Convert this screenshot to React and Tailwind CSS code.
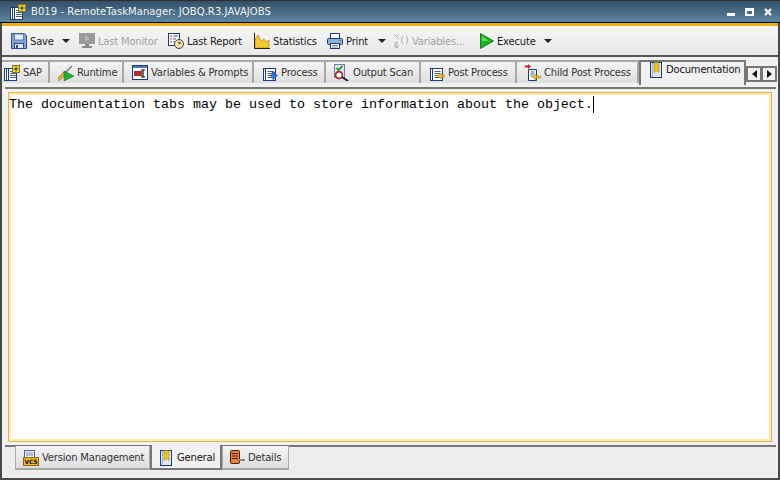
import { useState } from "react";

// small drawn icons
const DocBase = () => (
  <>
    <rect x="1.5" y="3.5" width="12" height="12" fill="#fff" stroke="#1c3c78" />
    <path d="M3.5 4v11" stroke="#1c3c78" />
    <path d="M5.5 6.5h6M5.5 8.5h6M5.5 10.5h6M5.5 12.5h6" stroke="#44618f" />
  </>
);

const SapIcon = () => (
  <svg width="16" height="16" viewBox="0 0 16 16" className="shrink-0">
    <rect x="0.5" y="3.5" width="12" height="12" fill="#fff" stroke="#1c3c78" />
    <path d="M2.5 4v11M4.5 4v11" stroke="#1c3c78" />
    <path d="M6 6.5h6M6 8.5h6M6 10.5h6M6 12.5h6" stroke="#44618f" />
    <rect x="8.5" y="0.5" width="7" height="7" fill="#f5d820" stroke="#8a7a10" />
    <path d="M12 1.5v5M9.5 4h5" stroke="#1c3c78" />
  </svg>
);

const SaveIcon = () => (
  <svg width="16" height="16" viewBox="0 0 16 16" className="shrink-0">
    <path d="M.5.5h13l2 2v13H.5z" fill="#7fa6d6" stroke="#2c4f8c" />
    <rect x="3.5" y="1" width="9" height="6" fill="#e8eef6" stroke="#5d7fb0" />
    <rect x="3.5" y="10.5" width="9" height="5" fill="#dfe6ef" stroke="#2c4f8c" />
    <rect x="5" y="12" width="2" height="3" fill="#2c4f8c" />
  </svg>
);

const MonitorIcon = () => (
  <svg width="16" height="16" viewBox="0 0 16 16" className="shrink-0">
    <rect x="0" y="0" width="16" height="11" fill="#9b9b9b" />
    <path d="M6 2.5l5 3-5 3z" fill="#b8b8b8" />
    <rect x="6" y="11" width="4" height="2" fill="#8a8a8a" />
    <rect x="3" y="13" width="10" height="2" fill="#8a8a8a" />
  </svg>
);

const ReportIcon = () => (
  <svg width="16" height="16" viewBox="0 0 16 16" className="shrink-0">
    <rect x="0.5" y="0.5" width="11" height="12" fill="#fff" stroke="#1c3c78" />
    <path d="M2 3h2M2 6h2M2 9h2" stroke="#c03030" />
    <path d="M5 3h5M5 6h3M5 9h2" stroke="#44618f" />
    <circle cx="11" cy="11" r="4.5" fill="#f3e3a8" stroke="#444" />
    <path d="M11 8.5V11l2-1.5" fill="none" stroke="#333" />
  </svg>
);

const StatsIcon = () => (
  <svg width="16" height="16" viewBox="0 0 16 16" className="shrink-0">
    <path d="M1 15V6l3-4 3 6 3-2 2 3 3-2v8z" fill="#f0c830" stroke="#a08010" strokeWidth=".6" />
    <path d="M.5 0v15.5H16" fill="none" stroke="#222" />
  </svg>
);

const PrintIcon = () => (
  <svg width="16" height="16" viewBox="0 0 16 16" className="shrink-0">
    <rect x="3.5" y="0.5" width="9" height="5" fill="#fff" stroke="#1c3c78" />
    <rect x="0.5" y="5.5" width="15" height="6" rx="1" fill="#8fb0d8" stroke="#1c3c78" />
    <rect x="12" y="7" width="2" height="1" fill="#30b040" />
    <rect x="3.5" y="10.5" width="9" height="5" fill="#fff" stroke="#1c3c78" />
    <path d="M5 12.5h6M5 14h6" stroke="#7f93b5" />
  </svg>
);

const VarsIcon = () => (
  <svg width="16" height="16" viewBox="0 0 16 16" className="shrink-0" fill="none" stroke="#a8a8a8">
    <path d="M1 1l5 5M6 1L3.5 3.5" stroke="#b5b5b5" />
    <path d="M5 15L2 11c-1-1.500 2-3 2.500-1.500S2 12 1.500 13s1 2 2 1.500L6 12" />
    <path d="M10 3C8.500 3 9.500 6 8 7c1.500 1 .5 4 2 4M13 3c1.500 0 .5 3 2 4-1.500 1-.5 4-2 4" />
  </svg>
);

const PlayIcon = () => (
  <svg width="14" height="16" viewBox="0 0 14 16" className="shrink-0">
    <path d="M0.5 0.5v15L13.5 8z" fill="#20b020" stroke="#178017" />
    <path d="M2 3v5h7z" fill="#60d860" />
  </svg>
);

const RuntimeIcon = () => (
  <svg width="16" height="16" viewBox="0 0 16 16" className="shrink-0">
    <path d="M1 14L7 8" stroke="#b08020" strokeWidth="3.4" strokeLinecap="round" />
    <path d="M1 14L7 8" stroke="#f0c050" strokeWidth="1.6" strokeLinecap="round" />
    <path d="M8 7l5-5 1-1" stroke="#777" strokeWidth="1.5" />
    <path d="M6 6v10l10-5z" fill="#20b030" stroke="#178020" strokeWidth=".6" />
  </svg>
);

const VariablesIcon = () => (
  <svg width="16" height="15" viewBox="0 0 16 15" className="shrink-0">
    <rect x="0.5" y="0.5" width="15" height="14" fill="#fff" stroke="#1c3c78" />
    <rect x="1" y="1" width="14" height="2" fill="#4a78b8" />
    <rect x="2" y="6" width="8" height="5" fill="#b03030" />
    <path d="M9 5h4M11 5v7M9 12h4" stroke="#111" strokeWidth="1.2" />
  </svg>
);

const ProcessIcon = () => (
  <svg width="16" height="16" viewBox="0 0 16 16" className="shrink-0">
    <DocBase />
    <path d="M10 7h3v3h2.500L11.500 15 8 10h2z" fill="#3a7ad0" stroke="#1c3c78" strokeWidth=".5" />
  </svg>
);

const ScanIcon = () => (
  <svg width="16" height="17" viewBox="0 0 16 17" className="shrink-0">
    <rect x="0.5" y="0.5" width="10" height="13" fill="#dfe4ee" stroke="#6f7f9f" />
    <path d="M2.500 4l2 2 4-4" fill="none" stroke="#20a030" strokeWidth="1.8" />
    <circle cx="5" cy="11" r="3.4" fill="#fff" stroke="#b02020" strokeWidth="1.6" />
    <path d="M8 13l6 4" stroke="#222" strokeWidth="2" />
  </svg>
);

const PostIcon = () => (
  <svg width="16" height="16" viewBox="0 0 16 16" className="shrink-0">
    <DocBase />
    <path d="M8 11l4-3v2h4v2h-4v2z" fill="#f0c030" stroke="#9a7a10" strokeWidth=".5" />
  </svg>
);

const ChildPostIcon = () => (
  <svg width="16" height="17" viewBox="0 0 16 17" className="shrink-0">
    <path d="M0 2.500h4" stroke="#d01818" strokeWidth="2" />
    <path d="M3 0l3 2.500L3 5z" fill="#d01818" />
    <path d="M3.500 5.500h8v11h-8z" fill="#fff" stroke="#1c3c78" />
    <path d="M5.500 8h4M5.500 10h4M5.500 12h2" stroke="#44618f" />
    <path d="M7 13l4-3v2h5v2h-5v2z" fill="#f0c030" stroke="#9a7a10" strokeWidth=".5" />
  </svg>
);

const BookIcon = () => (
  <svg width="12" height="16" viewBox="0 0 12 16" className="shrink-0">
    <rect x="0.5" y="0.5" width="11" height="15" fill="#dfe6f2" stroke="#1c3c78" />
    <path d="M2.500 1v14" stroke="#9fb2d0" />
    <path d="M4 0.500h5v10l-2.500-2-2.500 2z" fill="#f0c020" stroke="#9a7a10" strokeWidth=".5" />
  </svg>
);

const VcsIcon = () => (
  <svg width="16" height="16" viewBox="0 0 16 16" className="shrink-0">
    <rect x="1.500" y="0.500" width="10" height="12" fill="#e8ecf4" stroke="#4a6796" />
    <path d="M3 3h7M3 5h7" stroke="#7f93b5" />
    <rect x="0.500" y="7.500" width="15" height="8" fill="#f0b828" stroke="#8a6810" />
    <text x="8" y="14" textAnchor="middle" fontFamily="DejaVu Sans" fontSize="6" fontWeight="700" fill="#111">VCS</text>
  </svg>
);

const DetailsIcon = () => (
  <svg width="15" height="15" viewBox="0 0 15 15" className="shrink-0">
    <rect x="0.500" y="0.500" width="9" height="13" rx="1" fill="#f08030" stroke="#402010" />
    <path d="M2 3.500h6M2 6h6M2 8.500h6" stroke="#402010" />
    <rect x="7" y="9" width="8" height="2" fill="#8a8a8a" />
  </svg>
);

const Caret = () => (
  <span className="w-0 h-0 border-x-[4px] border-x-transparent border-t-[4px] border-t-[#222]"></span>
);

function ToolItem({ icon, label, off, caret, caretGap, className }) {
  return (
    <div className={`flex items-center shrink-0 ${className}`}>
      {icon}
      <span className={`ml-[3px] whitespace-nowrap ${off ? "text-[#a3a3a3]" : "text-[#1a1a1a]"}`}>{label}</span>
      {caret && <span className={`flex ${caretGap}`}><Caret /></span>}
    </div>
  );
}

function Tab({ icon, label, width, first }) {
  return (
    <div
      style={{ width }}
      className={`h-[23px] flex items-center ${first ? "pl-[2px]" : "pl-[8px]"} gap-[3px] bg-gradient-to-b from-[#f4f4f4] to-[#dedede] border-r-2 border-t-2 border-[#a8a8a8] text-[#333] shrink-0 whitespace-nowrap`}
    >
      {icon}
      <span>{label}</span>
    </div>
  );
}

function BottomTab({ icon, label, width, active }) {
  return (
    <div
      style={{ width }}
      className={
        active
          ? "h-[25px] -mt-[2px] pt-[2px] flex items-center pl-[8px] gap-[5px] bg-[#f1f1f1] border-x-2 border-b-2 border-[#777] text-[#111] shrink-0 whitespace-nowrap"
          : "h-[24px] -mt-[1px] pt-[1px] flex items-center pl-[7px] gap-[3px] bg-gradient-to-b from-[#f4f4f4] to-[#dedede] border-x border-b-2 border-[#a8a8a8] text-[#333] shrink-0 whitespace-nowrap"
      }
    >
      {icon}
      <span>{label}</span>
    </div>
  );
}

export default function App() {
  const [text] = useState("The documentation tabs may be used to store information about the object.");

  return (
    <div className="w-[780px] h-[480px] overflow-hidden flex flex-col bg-[#f1f1f1] font-['DejaVu_Sans',sans-serif] text-[10px] tracking-[-0.2px]">
      {/* Title bar */}
      <div className="h-[23px] shrink-0 flex items-center pl-[10px] pr-[8px] bg-gradient-to-b from-[#345066] to-[#5f86a3] border-t border-[#2a2f35] border-b border-b-black text-white">
        <SapIcon />
        <span className="ml-[5px] text-[#f2f5f7] tracking-[0.06px]">B019 - RemoteTaskManager: JOBQ.R3.JAVAJOBS</span>
        <div className="ml-auto flex items-center">
          <span className="w-[8px] h-[3px] mt-[5px] bg-white"></span>
          <span className="ml-[10px] w-[9px] h-[8px] border-2 border-t-[3px] border-white"></span>
          <svg width="8" height="8" viewBox="0 0 8 8" className="ml-[10px]">
            <path d="M1 1l6 6M7 1L1 7" stroke="#fff" strokeWidth="2.2" />
          </svg>
        </div>
      </div>

      {/* Window frame */}
      <div className="flex-1 min-h-0 flex flex-col border-x-2 border-b-2 border-[#4a4a4a]">
        <div className="h-[3px] shrink-0 bg-[#f1ae10]"></div>

        {/* Toolbar */}
        <div className="h-[31px] shrink-0 flex items-center pl-[9px] pt-[1px] bg-gradient-to-b from-[#f6f6f6] to-[#e8e8e8] border-b-2 border-[#555]">
          <ToolItem icon={<SaveIcon />} label="Save" caret caretGap="ml-[8px]" className="w-[68px]" />
          <ToolItem icon={<MonitorIcon />} label="Last Monitor" off className="w-[89px]" />
          <ToolItem icon={<ReportIcon />} label="Last Report" className="w-[86px]" />
          <ToolItem icon={<StatsIcon />} label="Statistics" className="w-[73px]" />
          <ToolItem icon={<PrintIcon />} label="Print" caret caretGap="ml-[10px]" className="w-[66px]" />
          <ToolItem icon={<VarsIcon />} label="Variables..." off className="w-[87px]" />
          <ToolItem icon={<PlayIcon />} label="Execute" caret caretGap="ml-[8px]" />
        </div>

        {/* Top tabs */}
        <div className="h-[24px] mt-[3px] shrink-0 flex items-start">
          <Tab icon={<SapIcon />} label="SAP" width={48} first />
          <Tab icon={<RuntimeIcon />} label="Runtime" width={74} />
          <Tab icon={<VariablesIcon />} label="Variables & Prompts" width={130} />
          <Tab icon={<ProcessIcon />} label="Process" width={72} />
          <Tab icon={<ScanIcon />} label="Output Scan" width={95} />
          <Tab icon={<PostIcon />} label="Post Process" width={96} />
          <Tab icon={<ChildPostIcon />} label="Child Post Process" width={122} />
          <div className="w-[107px] h-[25px] shrink-0 flex items-start pl-[9px] gap-[4px] bg-[#f1f1f1] border-2 border-b-0 border-[#777] text-[#111] whitespace-nowrap">
            <BookIcon />
            <span className="leading-[16px]">Documentation</span>
          </div>
          <div className="mt-[6px] flex">
            <div className="w-[16px] h-[16px] flex items-center justify-center border-2 border-[#777] bg-[#f1f1f1]">
              <span className="w-0 h-0 border-y-[4px] border-y-transparent border-r-[5px] border-r-[#111]"></span>
            </div>
            <div className="w-[16px] h-[16px] -ml-[1px] flex items-center justify-center border-2 border-[#777] bg-[#f1f1f1]">
              <span className="w-0 h-0 border-y-[4px] border-y-transparent border-l-[5px] border-l-[#111]"></span>
            </div>
          </div>
        </div>

        {/* Document panel */}
        <div className="mt-[3px] mx-[3px] mr-[2px] flex-1 min-h-0 flex flex-col border-t-2 border-[#777]">
          <div className="flex-1 min-h-0 mt-[3px] mx-[3px] mr-[4px] bg-white border border-[#d9b65c] shadow-[inset_0_0_0_2px_#ffe9ad]">
            <div className="pt-[3px] flex items-center font-['Liberation_Mono',monospace] text-[13.33px] leading-[16px] tracking-normal text-black">
              {text}
              <span className="w-px h-[17px] bg-black"></span>
            </div>
          </div>
        </div>

        {/* Bottom tabs */}
        <div className="h-[32px] mt-[3px] mb-[1px] ml-[3px] mr-[2px] shrink-0 border-t-2 border-[#777] flex items-start pl-[10px] bg-[#ececec]">
          <BottomTab icon={<VcsIcon />} label="Version Management" width={135} />
          <BottomTab icon={<BookIcon />} label="General" width={72} active />
          <BottomTab icon={<DetailsIcon />} label="Details" width={67} />
        </div>
      </div>
    </div>
  );
}
